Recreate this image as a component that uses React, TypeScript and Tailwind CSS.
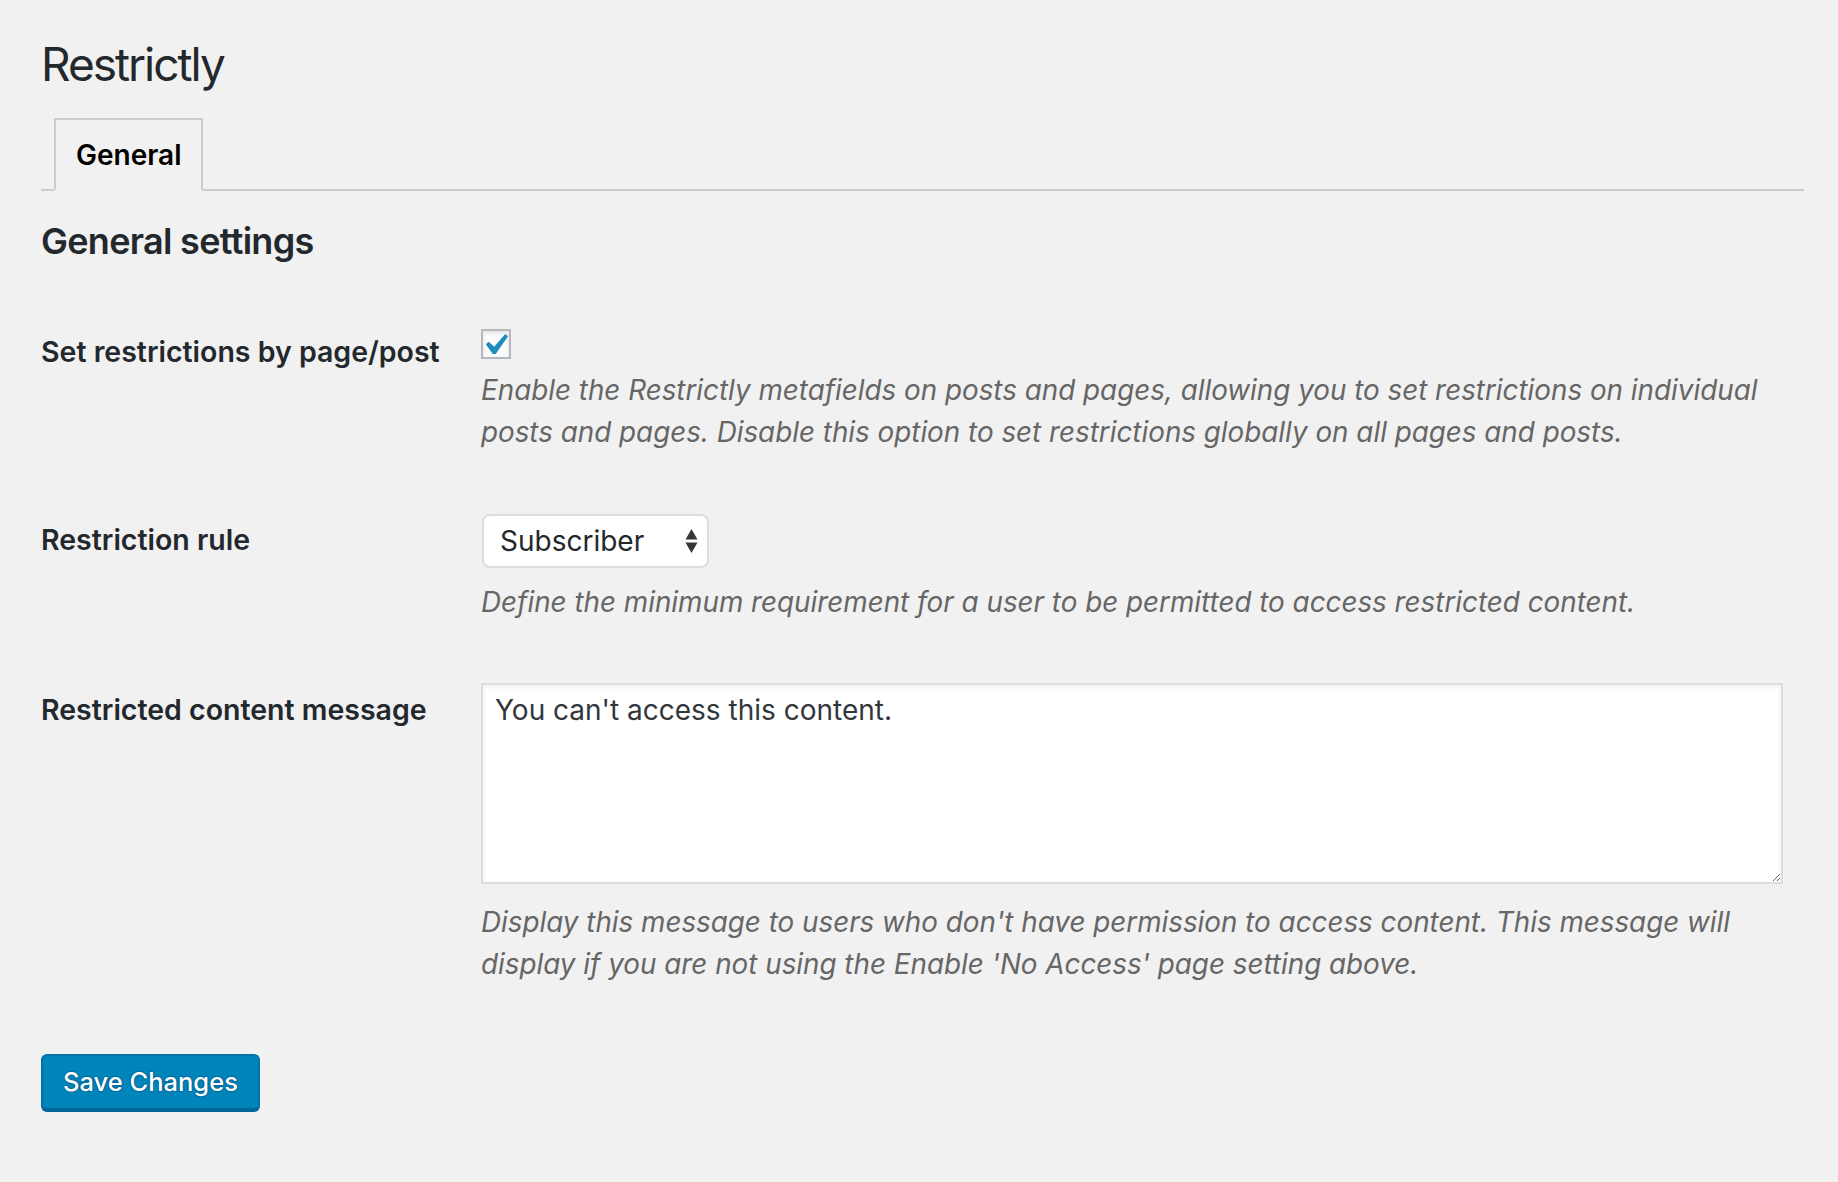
import React from "react";

export default function App() {
  const font = { fontFamily: "Inter, 'Noto Sans', sans-serif" };
  return (
    <div className="min-h-screen w-full bg-[#f1f1f1] pl-[41px] pr-[34px] text-[#23282d]" style={font}>
      <h1 className="pt-[34px] text-[46px] leading-[60px] font-normal tracking-[-2px]">Restrictly</h1>

      <div className="mt-[24px] flex border-b-2 border-[#ccc] pl-[13px]">
        <div className="-mb-[2px] flex h-[73px] items-center border-2 border-b-2 border-[#ccc] border-b-[#f1f1f1] bg-[#f1f1f1] px-[20px] text-[28px] font-semibold text-black">
          General
        </div>
      </div>

      <h2 className="mt-[28px] text-[36px] font-semibold leading-[44px] tracking-[-0.7px]">General settings</h2>

      <div className="w-[1742px]">
        {/* Row 1 */}
        <div className="mt-[66px] flex">
          <div className="w-[440px] shrink-0 pt-[2px] text-[28.5px] font-semibold leading-[42px]">
            Set restrictions by page/post
          </div>
          <div className="flex-1">
            <div className="relative h-[30px] w-[30px] border-2 border-[#b4b9be] bg-[#fbfbfb] shadow-[inset_0_2px_4px_rgba(0,0,0,0.1)]">
              <svg viewBox="5.4 4.4 11.2 10.2" className="absolute left-[2px] top-[2px] h-[22px] w-[24px]" fill="#1e8cbe">
                <path d="M14.83 4.89l1.34.94-5.81 8.38H9.02L5.78 9.67l1.34-1.25 2.57 2.4z" />
              </svg>
            </div>
            <p className="mt-[10px] text-[27.8px] italic leading-[42px] text-[#666]">
              Enable the Restrictly metafields on posts and pages, allowing you to set restrictions on individual posts and pages. Disable this option to set restrictions globally on all pages and posts.
            </p>
          </div>
        </div>

        {/* Row 2 */}
        <div className="mt-[61px] flex">
          <div className="w-[440px] shrink-0 pt-[5px] text-[28.5px] font-semibold leading-[42px]">Restriction rule</div>
          <div className="flex-1">
            <div className="ml-[1px] flex h-[54px] w-[227px] items-center justify-between rounded-[8px] border-2 border-[#ddd] bg-white pl-[16px] pr-[8px] text-[28px]">
              <span>Subscriber</span>
              <svg viewBox="0 0 10 20" className="h-[30px] w-[15px]" fill="#32373c">
                <path d="M5 2 L9 9 L1 9 Z" />
                <path d="M1 11 L9 11 L5 18 Z" />
              </svg>
            </div>
            <p className="mt-[13px] text-[27.8px] italic leading-[42px] text-[#666]">
              Define the minimum requirement for a user to be permitted to access restricted content.
            </p>
          </div>
        </div>

        {/* Row 3 */}
        <div className="mt-[60px] flex">
          <div className="w-[440px] shrink-0 pt-[6px] text-[28.5px] font-semibold leading-[42px]">Restricted content message</div>
          <div className="flex-1">
            <textarea
              defaultValue="You can't access this content."
              className="block h-[201px] w-[1302px] resize border-2 border-[#ddd] bg-white px-[12px] pt-[4px] text-[28px] leading-[42px] text-[#32373c] shadow-[inset_0_2px_4px_rgba(0,0,0,0.07)] outline-none"
              style={font}
            />
            <p className="mt-[17px] w-[1302px] text-[27.8px] italic leading-[42px] text-[#666]">
              Display this message to users who don't have permission to access content. This message will display if you are not using the Enable 'No Access' page setting above.
            </p>
          </div>
        </div>
      </div>

      <button
        className="mt-[69px] h-[56px] rounded-[6px] border-2 border-[#0073aa] border-b-[#006799] bg-[#0085ba] px-[20px] text-[25.5px] font-medium text-white shadow-[0_2px_0_#006799] [text-shadow:0_-1px_1px_#006799,1px_0_1px_#006799,0_1px_1px_#006799,-1px_0_1px_#006799]"
        style={font}
      >
        Save Changes
      </button>
    </div>
  );
}
